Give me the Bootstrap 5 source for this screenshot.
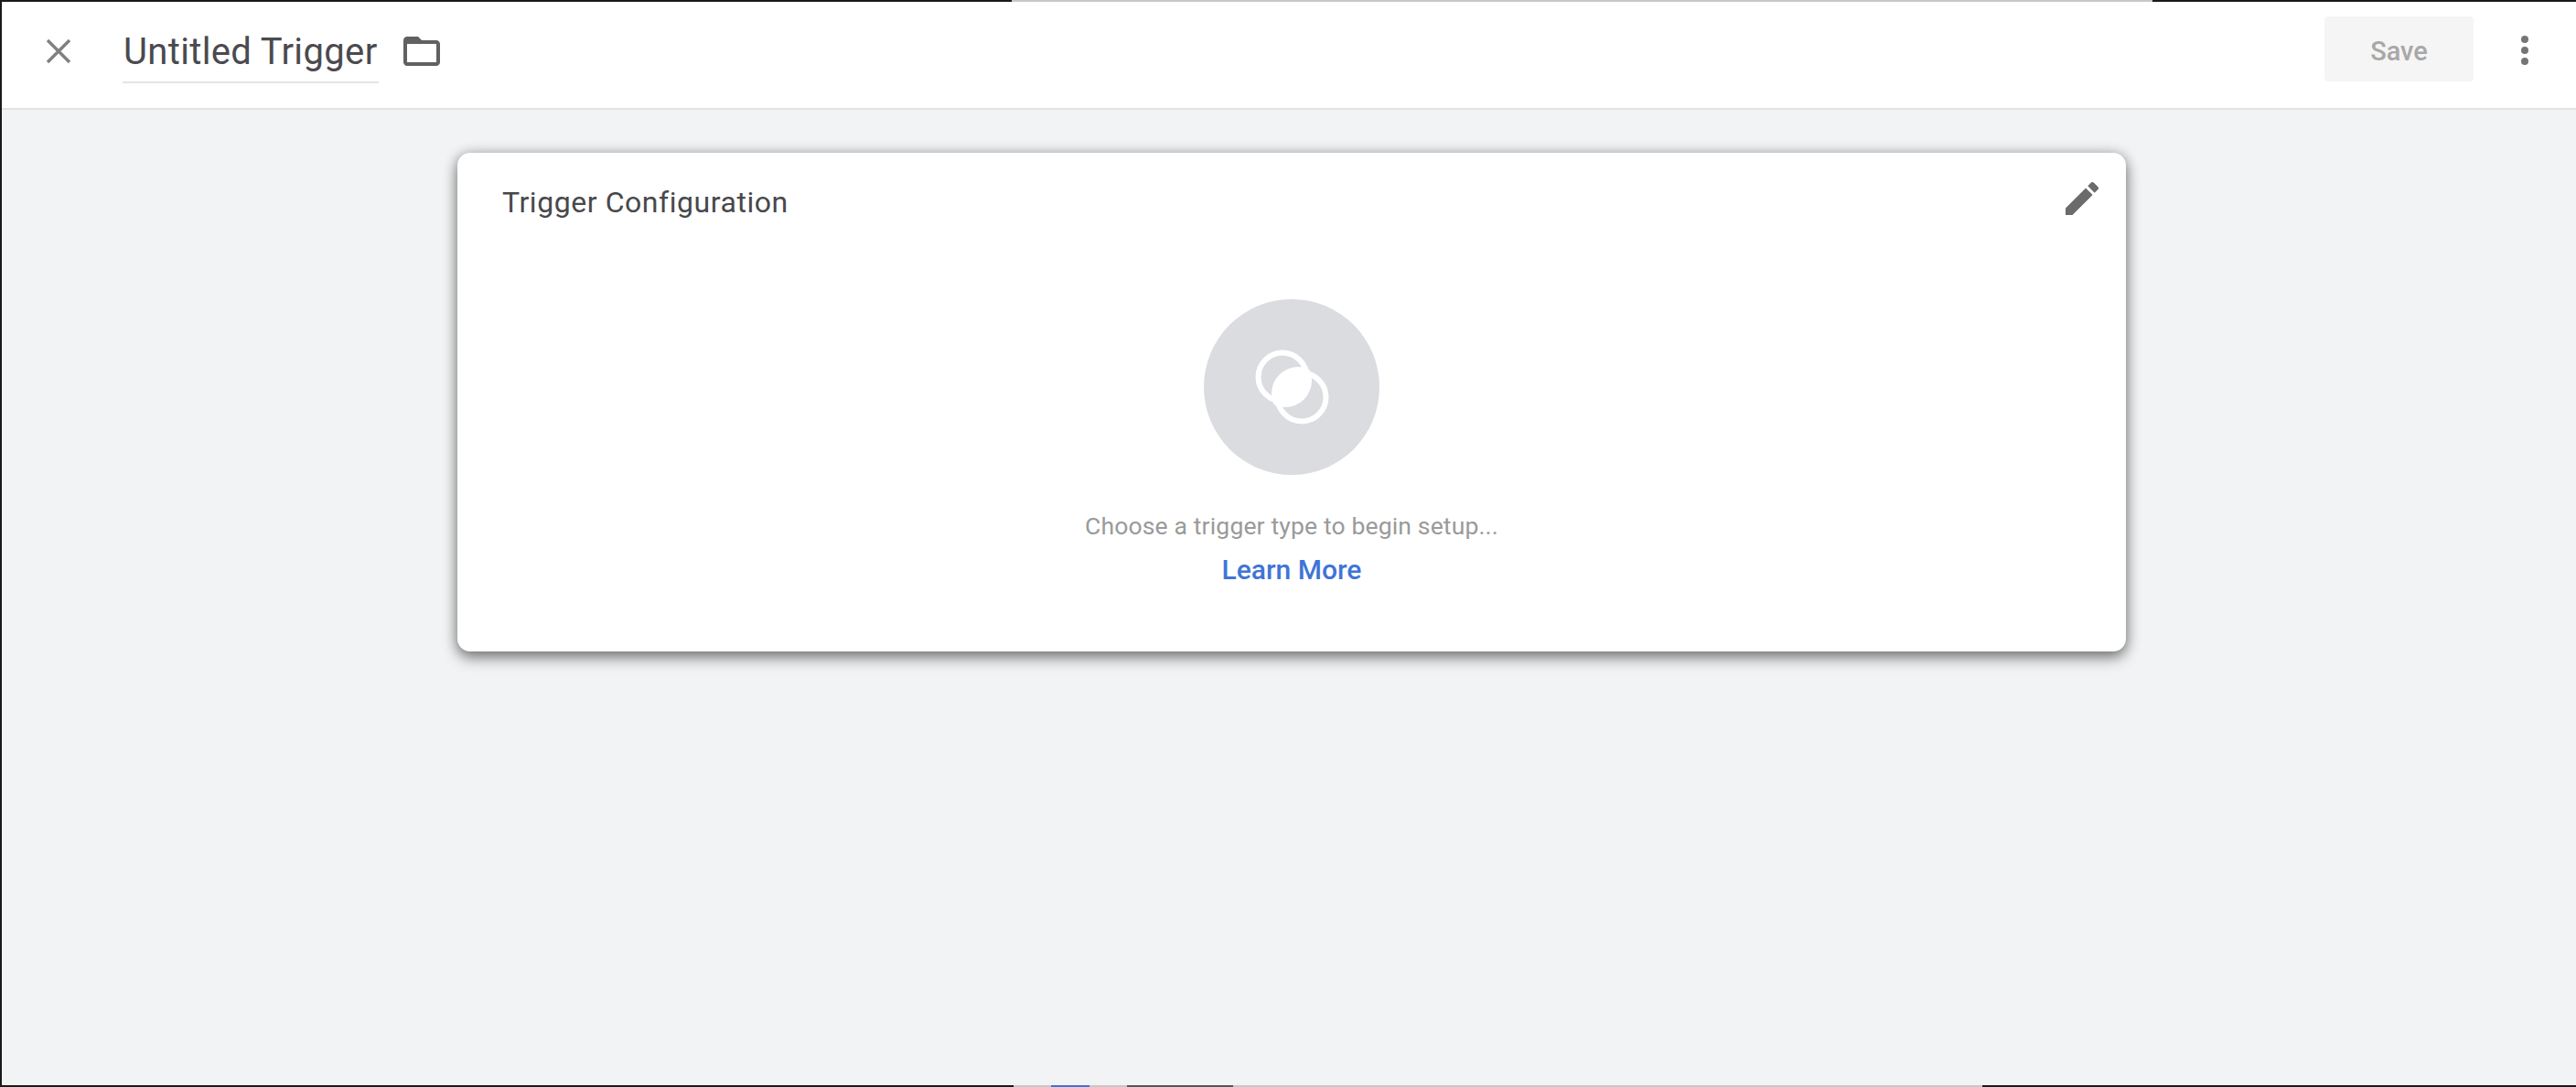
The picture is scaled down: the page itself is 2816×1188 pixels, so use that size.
<!DOCTYPE html>
<html lang="en">
<head>
    <meta charset="UTF-8">
    <meta name="viewport" content="width=device-width, initial-scale=1.0">
    <title>Untitled Trigger</title>
    <link href="https://cdn.jsdelivr.net/npm/bootstrap@5.3.0/dist/css/bootstrap.min.css" rel="stylesheet">
    <style>
        html, body {
            height: 100%;
            overflow: hidden;
        }
        body {
            background: #f1f3f4;
            font-family: Roboto, "Liberation Sans", sans-serif;
        }
        .page-wrap {
            height: 100vh;
            border-left: 2px solid #1a1a1a;
        }
        .edge-strip {
            height: 2px;
            flex: 0 0 2px;
            background: #1a1a1a;
        }
        .edge-top .edge-mid {
            margin-left: 1104px;
            width: 1247px;
            background: #c8c8c8;
            height: 2px;
        }
        .edge-bottom .edge-mid {
            margin-left: 1106px;
            width: 1059px;
            background: #c8c8c8;
            height: 2px;
        }
        .edge-blue {
            width: 42px;
            margin-left: 41px;
            background: #3f74d6;
        }
        .edge-dark {
            width: 116px;
            margin-left: 41px;
            background: #555;
        }
        .top-bar {
            height: 118px;
            flex: 0 0 118px;
            background: #fff;
            border-bottom: 2px solid #e2e2e2;
            padding-left: 48px;
            padding-right: 48px;
        }
        .close-icon {
            width: 28px;
            height: 28px;
            margin-right: 56px;
            margin-bottom: 8px;
        }
        .title-field {
            font-size: 40px;
            line-height: 40px;
            letter-spacing: .35px;
            color: #4a4a4f;
            border-bottom: 2px solid #e4e4e4;
            height: 60px;
            padding-top: 6px;
            padding-left: 1px;
            width: 280px;
            white-space: nowrap;
            margin-top: 29px;
        }
        .folder-icon {
            width: 48px;
            height: 48px;
            margin-left: 23px;
            margin-bottom: 8px;
        }
        .save-btn {
            width: 163px;
            height: 71px;
            background: #f5f5f5;
            border: 0;
            border-radius: 4px;
            color: #a8a8a8;
            font-size: 29px;
            font-weight: 500;
            margin-right: 48px;
            margin-bottom: 13px;
            padding-top: 8px;
        }
        .dots-icon {
            width: 16px;
            height: 40px;
            margin-bottom: 10px;
        }
        .canvas-area {
            background: #f1f3f4;
            padding-top: 47px;
            padding-left: 498px;
        }
        .trigger-panel {
            width: 1824px;
            height: 545px;
            background: #fff;
            border-radius: 14px;
            box-shadow: 0 7px 16px rgba(0, 0, 0, .45), 0 0 14px rgba(0, 0, 0, .22);
        }
        .panel-head {
            padding: 34px 24px 0 49px;
        }
        .panel-title {
            font-size: 32px;
            line-height: 40px;
            letter-spacing: .55px;
            color: #48484c;
            margin: 0;
            font-weight: 400;
        }
        .edit-icon {
            width: 48px;
            height: 48px;
            margin-top: -8px;
        }
        .type-circle {
            width: 192px;
            height: 192px;
            margin-top: 86px;
        }
        .hint-text {
            font-size: 26.5px;
            line-height: 34px;
            color: #9a9a9a;
            margin-top: 39px;
            letter-spacing: .15px;
        }
        .learn-link {
            font-size: 30px;
            line-height: 34px;
            font-weight: 500;
            color: #3f74d6;
            text-decoration: none;
            margin-top: 14px;
        }
    </style>
</head>
<body>
    <div class="page-wrap d-flex flex-column">
        <div class="edge-strip edge-top"><div class="edge-mid"></div></div>

        <!-- Top bar -->
        <div class="top-bar d-flex align-items-center">
            <svg class="close-icon" viewBox="0 0 28 28" fill="none" stroke="#808080" stroke-width="3.4">
                <path d="M2 2 L26 26 M26 2 L2 26"/>
            </svg>
            <div class="title-field align-self-start">Untitled Trigger</div>
            <svg class="folder-icon" viewBox="0 0 24 24" fill="#616161">
                <path d="M9.17 6l2 2H20v10H4V6h5.17M10 4H4c-1.1 0-2 .9-2 2v12c0 1.1.9 2 2 2h16c1.1 0 2-.9 2-2V8c0-1.1-.9-2-2-2h-8l-2-2z"/>
                <path d="M4 5h5.5l2.5 3H4z"/>
            </svg>
            <div class="ms-auto d-flex align-items-center">
                <button class="save-btn" type="button" disabled>Save</button>
                <svg class="dots-icon" viewBox="0 0 16 40" fill="#757575">
                    <circle cx="8" cy="8" r="4"/>
                    <circle cx="8" cy="20" r="4"/>
                    <circle cx="8" cy="32" r="4"/>
                </svg>
            </div>
        </div>

        <!-- Main -->
        <div class="canvas-area flex-grow-1">
            <div class="trigger-panel d-flex flex-column">
                <div class="panel-head d-flex justify-content-between align-items-start">
                    <h2 class="panel-title">Trigger Configuration</h2>
                    <svg class="edit-icon" viewBox="0 0 24 24" fill="#6b6b6b">
                        <path d="M3 17.25V21h3.75L17.81 9.94l-3.75-3.75L3 17.25zM20.71 7.04a1 1 0 0 0 0-1.41l-2.34-2.34a1 1 0 0 0-1.41 0l-1.83 1.83 3.75 3.75 1.83-1.83z"/>
                    </svg>
                </div>
                <div class="d-flex flex-column align-items-center">
                    <svg class="type-circle" viewBox="0 0 192 192">
                        <defs>
                            <clipPath id="overlapClip"><circle cx="89" cy="89" r="29"/></clipPath>
                        </defs>
                        <circle cx="96" cy="96" r="96" fill="#dadce0"/>
                        <circle cx="86" cy="85" r="26.5" fill="none" stroke="#fff" stroke-width="6"/>
                        <circle cx="107" cy="107" r="26.5" fill="none" stroke="#fff" stroke-width="6"/>
                        <circle cx="103" cy="103" r="29" fill="#fff" clip-path="url(#overlapClip)"/>
                    </svg>
                    <div class="hint-text">Choose a trigger type to begin setup...</div>
                    <a class="learn-link" href="#">Learn More</a>
                </div>
            </div>
        </div>

        <div class="edge-strip edge-bottom d-flex">
            <div class="edge-mid d-flex">
                <div class="edge-blue"></div>
                <div class="edge-dark"></div>
            </div>
        </div>
    </div>

    <script src="https://cdn.jsdelivr.net/npm/bootstrap@5.3.0/dist/js/bootstrap.bundle.min.js"></script>
</body>
</html>
